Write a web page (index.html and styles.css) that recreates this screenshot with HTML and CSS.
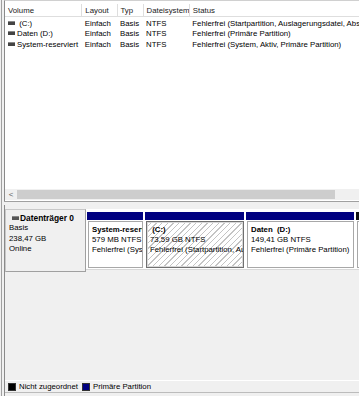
FILE: index.html
```html
<!DOCTYPE html>
<html>
<head>
<meta charset="utf-8">
<link rel="stylesheet" href="styles.css">
<title>Datenträgerverwaltung</title>
</head>
<body>
<div class="window">
  <div class="list">
    <table class="vols">
      <tr>
        <th class="c-vol">Volume</th>
        <th class="c-lay">Layout</th>
        <th class="c-typ">Typ</th>
        <th class="c-fs">Dateisystem</th>
        <th class="c-st">Status</th>
      </tr>
      <tr>
        <td><span class="drv"></span> (C:)</td>
        <td>Einfach</td>
        <td>Basis</td>
        <td>NTFS</td>
        <td>Fehlerfrei (Startpartition, Auslagerungsdatei, Absturzabbild, Primäre Partition)</td>
      </tr>
      <tr>
        <td><span class="drv"></span>Daten (D:)</td>
        <td>Einfach</td>
        <td>Basis</td>
        <td>NTFS</td>
        <td>Fehlerfrei (Primäre Partition)</td>
      </tr>
      <tr>
        <td><span class="drv"></span>System-reserviert</td>
        <td>Einfach</td>
        <td>Basis</td>
        <td>NTFS</td>
        <td>Fehlerfrei (System, Aktiv, Primäre Partition)</td>
      </tr>
    </table>
    <div class="list-fill"></div>
    <div class="hscroll">
      <span class="arrow">&lt;</span>
      <div class="thumb"></div>
    </div>
  </div>
  <div class="split"></div>
  <div class="disks">
    <div class="disk">
      <div class="disk-label">
        <div class="disk-name"><span class="drv"></span>Datenträger 0</div>
        <div>Basis</div>
        <div>238,47 GB</div>
        <div>Online</div>
      </div>
      <div class="parts">
        <div class="part p-sys">
          <div class="bar"></div>
          <div class="box">
            <div class="pname">System-reserviert</div>
            <div>579 MB NTFS</div>
            <div>Fehlerfrei (System, Aktiv, Primäre Partition)</div>
          </div>
        </div>
        <div class="part p-c">
          <div class="bar"></div>
          <div class="box selected">
            <div class="pname">&nbsp;(C:)</div>
            <div>73,59 GB NTFS</div>
            <div>Fehlerfrei (Startpartition, Auslagerungsdatei)</div>
          </div>
        </div>
        <div class="part p-d">
          <div class="bar"></div>
          <div class="box">
            <div class="pname">Daten &nbsp;(D:)</div>
            <div>149,41 GB NTFS</div>
            <div>Fehlerfrei (Primäre Partition)</div>
          </div>
        </div>
        <div class="part p-more">
          <div class="bar"></div>
          <div class="box"></div>
        </div>
      </div>
    </div>
    <div class="disks-fill"></div>
    <div class="legend">
      <span class="key k-free"></span>Nicht zugeordnet
      <span class="key k-prim"></span>Primäre Partition
    </div>
  </div>
</div>
</body>
</html>
```

FILE: styles.css
```css
html, body {
  margin: 0;
  padding: 0;
  background-color: #f0f0f0;
  font-family: "Liberation Sans", Arial, sans-serif;
  font-size: 7.8px;
  color: #000;
}
.window {
  width: 359px;
  height: 396px;
  overflow: hidden;
  display: flex;
  flex-direction: column;
  box-sizing: border-box;
  border-left: 1px solid #a0a0a0;
  margin-left: 1px;
  padding-left: 2px;
}

/* volume list */
.list {
  height: 200px;
  display: flex;
  flex-direction: column;
  background-color: white;
  border-left: 1px solid #8a8a8a;
  border-top: 1px solid #d0d0d0;
  overflow: hidden;
}
table.vols {
  border-collapse: collapse;
  width: 440px;
  table-layout: fixed;
  margin-top: 3px;
}
.vols th, .vols td {
  padding: 0 0 0 3px;
  text-align: left;
  white-space: nowrap;
  overflow: hidden;
  font-weight: normal;
}
.vols th {
  height: 12px;
  border-right: 1px solid #dedede;
  border-bottom: 1px solid #dedede;
  color: #1a1a1a;
}
.vols td {
  height: 10.5px;
}
.vols tr:nth-child(2) td {
  padding-top: 1px;
}
.c-vol { width: 73px; }
.c-lay { width: 31px; }
.c-typ { width: 22px; }
.c-fs { width: 42px; }
.c-st { width: 250px; }
.drv {
  display: inline-block;
  width: 7px;
  height: 3px;
  background-color: #444;
  border-top: 1px solid #888;
  vertical-align: 1px;
  margin-right: 2px;
}
.list-fill {
  flex: 1;
}
.hscroll {
  height: 11px;
  margin-bottom: 1px;
  display: flex;
  align-items: center;
  background-color: #f0f0f0;
}
.hscroll .arrow {
  width: 12px;
  text-align: center;
  color: #606060;
  font-size: 8px;
}
.hscroll .thumb {
  width: 318px;
  height: 9px;
  background-color: #cdcdcd;
}

.split {
  height: 3px;
  border-top: 1px solid #a0a0a0;
  background-color: #f0f0f0;
}

/* disk pane */
.disks {
  flex: 1;
  display: flex;
  flex-direction: column;
  border-left: 1px solid #8a8a8a;
}
.disk {
  display: flex;
  margin-top: 4px;
  height: 63px;
}
.disk-label {
  flex-shrink: 0;
  width: 76px;
  padding: 3px 0 0 3px;
  border: 1px solid #c8c8c8;
  border-right-color: #a0a0a0;
  border-bottom-color: #a0a0a0;
  line-height: 10.3px;
}
.disk-name {
  font-weight: bold;
  font-size: 8.4px;
  white-space: nowrap;
}
.disk-name .drv {
  margin-left: 3px;
  margin-right: 1px;
  background-color: #555;
}
.parts {
  flex: 1;
  display: flex;
  overflow: hidden;
  background-color: white;
  border-bottom: 1px solid #d8d8d8;
  margin-bottom: 2px;
}
.part {
  flex-shrink: 0;
  display: flex;
  flex-direction: column;
  padding: 3px 1px 0 1px;
}
.p-sys { width: 56px; }
.p-c { width: 99px; }
.p-d { width: 108px; }
.p-more { width: 8px; }
.bar {
  height: 8px;
  background-color: #000080;
}
.p-more .bar {
  background-color: #111;
}
.box {
  flex: 1;
  margin: 1px 0 1px 1px;
  border: 1px solid #a8a8a8;
  padding: 3px 0 0 3px;
  white-space: nowrap;
  overflow: hidden;
  line-height: 10px;
  background-color: white;
}
.box.selected {
  border: 1px solid #707070;
  box-shadow: inset 0 0 0 1px #d8d8d8;
  background: repeating-linear-gradient(135deg, #ffffff 0, #ffffff 3px, #c4c4c4 3px, #c4c4c4 4px);
}
.pname {
  font-weight: bold;
}
.disks-fill {
  flex: 1;
}
.legend {
  height: 11px;
  border-top: 1px solid white;
  border-bottom: 1px solid #bcbcbc;
  margin-bottom: 3px;
  display: flex;
  align-items: center;
  white-space: nowrap;
  padding-left: 3px;
}
.key {
  display: inline-block;
  width: 6px;
  height: 6px;
  border: 1px solid #333;
  margin-right: 3px;
}
.k-free {
  background-color: #000;
}
.k-prim {
  background-color: #000080;
  margin-left: 4px;
}
```
